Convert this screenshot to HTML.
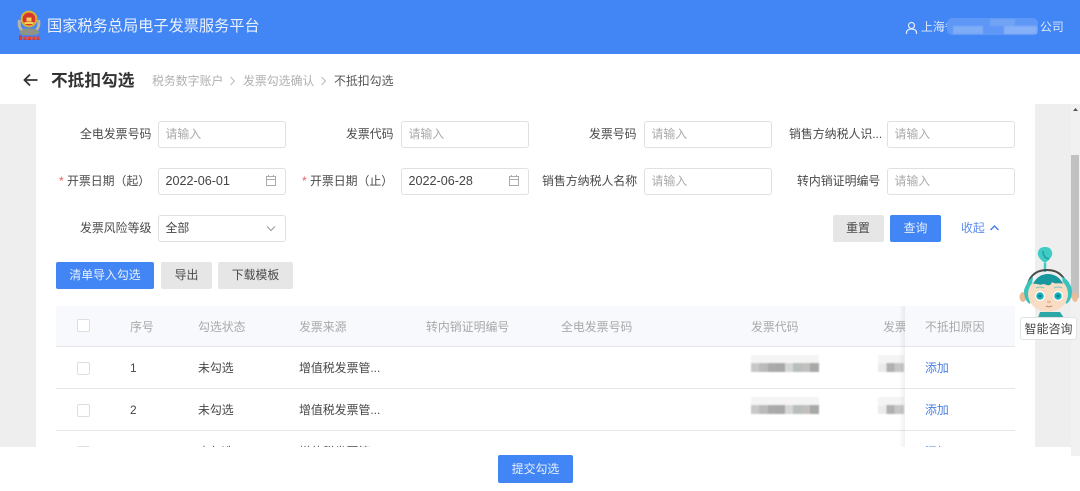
<!DOCTYPE html>
<html lang="zh-CN">
<head>
<meta charset="utf-8">
<title>不抵扣勾选</title>
<style>
html,body{margin:0;padding:0;background:#fff}
body{width:1080px;height:491px;position:relative;overflow:hidden;font-family:"Liberation Sans","Noto Sans CJK SC",sans-serif;font-size:11.9px;color:#444}
#r{position:absolute;left:0;top:0;width:1080px;height:491px;overflow:hidden;filter:blur(.3px)}
.a{position:absolute;white-space:nowrap}
.t{position:absolute;white-space:nowrap;line-height:18px;height:18px}
.l{position:absolute;white-space:nowrap;line-height:18px;height:18px;text-align:right;color:#4a4a4a}
.i{position:absolute;box-sizing:border-box;width:128px;height:27px;border:1px solid #e0e0e0;border-radius:3px;background:#fff;line-height:25px;padding-left:7px;color:#a8a8a8}
.v{color:#444}
.s{color:#e56060}
.btn{position:absolute;box-sizing:border-box;height:27px;line-height:27px;text-align:center;border-radius:2px;background:#e6e6e6;color:#4a4a4a}
.p{background:#4285f4;color:#e8f0fe}
.th{position:absolute;top:318px;line-height:18px;color:#a9a9a9;white-space:nowrap}
.td{position:absolute;line-height:18px;color:#484848;white-space:nowrap}
.cb{position:absolute;left:77px;width:13px;height:13px;box-sizing:border-box;border:1px solid #dedede;border-radius:2px;background:#fff}
.ln{position:absolute;left:56px;width:959px;height:1.4px;background:#e6e6e6}
.b{position:absolute;filter:blur(.7px)}
</style>
</head>
<body>
<div id="r">
<!-- header -->
<div class="a" style="left:0;top:0;width:1080px;height:54px;background:#4285f4"></div>
<svg class="a" style="left:16px;top:8px" width="26" height="36" viewBox="0 0 26 36">
<path d="M3.5 12C2 19 5 24 13 25.5C21 24 24 19 22.5 12" fill="none" stroke="#b9b4a6" stroke-width="3"/>
<path d="M3 24L8 20.5L18 20.5L24 24L20 27L6 27Z" fill="#8f9287"/>
<circle cx="13" cy="11" r="8.4" fill="#d8b13a"/>
<circle cx="13" cy="11" r="6.4" fill="#d6362c"/>
<path d="M8.5 14H17.5V16H8.5ZM10.5 9.5H15.5V13.5H10.5Z" fill="#f0cf58"/>
<path d="M3 27.5H6V32H3ZM7.5 28.5H10.5V32H7.5ZM12 28.5H15V32H12ZM16.5 28.5H19V32H16.5ZM20.5 28.5H23.5V32H20.5Z" fill="#d9342b"/>
<rect x="4" y="29.5" width="20" height="1" fill="#e8584c"/>
</svg>
<div class="t" style="left:47px;top:17px;font-size:15.2px;line-height:20px;height:20px;color:#eaf1fe">国家税务总局电子发票服务平台</div>
<svg class="a" style="left:905px;top:21px" width="13" height="14" viewBox="0 0 13 14">
<circle cx="6.5" cy="4.5" r="3" fill="none" stroke="#e3ecfd" stroke-width="1.2"/>
<path d="M1.5 13V11.5C1.5 9.5 3.5 8 6.5 8S11.5 9.5 11.5 11.5V13" fill="none" stroke="#e3ecfd" stroke-width="1.2"/>
</svg>
<div class="t" style="left:921px;top:18px;color:#dce8fd">上海省</div>
<div class="a" style="left:947px;top:18px;width:91px;height:17px;background:#5f97f6;border-radius:5px"></div>
<div class="b" style="left:953px;top:26px;width:30px;height:8px;background:#7eacf7"></div>
<div class="b" style="left:990px;top:19px;width:25px;height:7px;background:#72a4f6"></div>
<div class="b" style="left:1004px;top:26px;width:33px;height:8px;background:#86b1f8"></div>
<div class="t" style="left:1040px;top:18px;color:#dce8fd">公司</div>

<!-- title bar -->
<svg class="a" style="left:23px;top:73px" width="15" height="14" viewBox="0 0 15 14">
<path d="M14.5 7H1.5M7 1.5L1.5 7L7 12.5" fill="none" stroke="#333" stroke-width="1.8"/>
</svg>
<div class="t" style="left:51px;top:70px;font-size:16.7px;line-height:22px;height:22px;font-weight:700;color:#333">不抵扣勾选</div>
<div class="t" style="left:152px;top:72px;color:#b0b0b0">税务数字账户</div>
<svg class="a" style="left:229px;top:76px" width="7" height="10" viewBox="0 0 7 10"><path d="M1.5 1L5.5 5L1.5 9" fill="none" stroke="#bbb"/></svg>
<div class="t" style="left:243px;top:72px;color:#b0b0b0">发票勾选确认</div>
<svg class="a" style="left:320px;top:76px" width="7" height="10" viewBox="0 0 7 10"><path d="M1.5 1L5.5 5L1.5 9" fill="none" stroke="#bbb"/></svg>
<div class="t" style="left:334px;top:72px;color:#555">不抵扣勾选</div>

<!-- page grey -->
<div class="a" style="left:0;top:104px;width:1080px;height:343px;background:#eeeeee"></div>
<div class="a" style="left:36px;top:104px;width:999px;height:343px;background:#fff"></div>
<div class="a" style="left:1071px;top:104px;width:9px;height:352px;background:#f1f1f1"></div>
<div class="a" style="left:1071px;top:155px;width:8px;height:143px;background:#c1c1c1"></div>
<svg class="a" style="left:1072px;top:107px" width="7" height="5" viewBox="0 0 7 5"><path d="M3.5 1L6 4H1Z" fill="#555"/></svg>

<!-- form row 1 -->
<div class="l" style="left:80px;top:125px">全电发票号码</div>
<div class="i" style="left:157.5px;top:121px">请输入</div>
<div class="l" style="left:346px;top:125px">发票代码</div>
<div class="i" style="left:400.5px;top:121px">请输入</div>
<div class="l" style="left:589px;top:125px">发票号码</div>
<div class="i" style="left:643.5px;top:121px">请输入</div>
<div class="l" style="left:789px;top:125px">销售方纳税人识...</div>
<div class="i" style="left:886.5px;top:121px">请输入</div>

<!-- form row 2 -->
<div class="l" style="left:59px;top:172px"><span class="s">* </span>开票日期（起）</div>
<div class="i v" style="left:157.5px;top:168px;font-size:12.6px">2022-06-01</div>
<svg class="a" style="left:265px;top:174px" width="12" height="13" viewBox="0 0 12 13"><path d="M1.5 2.5H10.5V11.5H1.5ZM1.5 5.5H10.5M3.5 1V3M8.5 1V3" fill="none" stroke="#aaa"/></svg>
<div class="l" style="left:302px;top:172px"><span class="s">* </span>开票日期（止）</div>
<div class="i v" style="left:400.5px;top:168px;font-size:12.6px">2022-06-28</div>
<svg class="a" style="left:508px;top:174px" width="12" height="13" viewBox="0 0 12 13"><path d="M1.5 2.5H10.5V11.5H1.5ZM1.5 5.5H10.5M3.5 1V3M8.5 1V3" fill="none" stroke="#aaa"/></svg>
<div class="l" style="left:542px;top:172px">销售方纳税人名称</div>
<div class="i" style="left:643.5px;top:168px">请输入</div>
<div class="l" style="left:797px;top:172px">转内销证明编号</div>
<div class="i" style="left:886.5px;top:168px">请输入</div>

<!-- form row 3 -->
<div class="l" style="left:80px;top:219px">发票风险等级</div>
<div class="i v" style="left:157.5px;top:215px">全部</div>
<svg class="a" style="left:266px;top:225px" width="10" height="7" viewBox="0 0 10 7"><path d="M1 1.5L5 5.5L9 1.5" fill="none" stroke="#999"/></svg>
<div class="btn" style="left:832.5px;top:215px;width:51px">重置</div>
<div class="btn p" style="left:890px;top:215px;width:51px">查询</div>
<div class="t" style="left:961px;top:219px;color:#5b8df0">收起</div>
<svg class="a" style="left:989px;top:224px" width="11" height="8" viewBox="0 0 11 8"><path d="M1.5 6L5.5 2L9.5 6" fill="none" stroke="#4a80ee" stroke-width="1.5"/></svg>

<!-- actions -->
<div class="btn p" style="left:56px;top:262px;width:98px">清单导入勾选</div>
<div class="btn" style="left:161px;top:262px;width:51px">导出</div>
<div class="btn" style="left:218px;top:262px;width:75px">下载模板</div>

<!-- table -->
<div class="a" style="left:56px;top:306px;width:959px;height:40px;background:#f8f9fd"></div>
<div class="ln" style="top:345.5px"></div>
<div class="ln" style="top:387.5px"></div>
<div class="ln" style="top:429.7px"></div>
<div class="cb" style="top:319px"></div>
<div class="th" style="left:130px">序号</div>
<div class="th" style="left:198px">勾选状态</div>
<div class="th" style="left:299px">发票来源</div>
<div class="th" style="left:426px">转内销证明编号</div>
<div class="th" style="left:561px">全电发票号码</div>
<div class="th" style="left:751px">发票代码</div>
<div class="th" style="left:883px">发票号码</div>

<div class="cb" style="top:362px"></div>
<div class="td" style="left:130px;top:359px">1</div>
<div class="td" style="left:198px;top:359px">未勾选</div>
<div class="td" style="left:299px;top:359px">增值税发票管...</div>
<div class="cb" style="top:404px"></div>
<div class="td" style="left:130px;top:401px">2</div>
<div class="td" style="left:198px;top:401px">未勾选</div>
<div class="td" style="left:299px;top:401px">增值税发票管...</div>
<div class="cb" style="top:446px"></div>
<div class="td" style="left:130px;top:443px">3</div>
<div class="td" style="left:198px;top:443px">未勾选</div>
<div class="td" style="left:299px;top:443px">增值税发票管...</div>

<!-- blur row 1 -->
<div class="b" style="left:751px;top:355px;width:68px;height:8px;background:#f4f4f4"></div>
<div class="b" style="left:751px;top:363px;width:68px;height:9px;background:linear-gradient(90deg,#c8c8c8 0 12%,#bbb 12% 25%,#aaa 25% 37%,#a8a8a8 37% 50%,#d6d6d6 50% 62%,#b8bebe 62% 75%,#c2c0bc 75% 87%,#a8a8a8 87%)"></div>
<div class="b" style="left:878px;top:355px;width:26px;height:8px;background:#f4f4f4"></div>
<div class="b" style="left:878px;top:363px;width:26px;height:9px;background:linear-gradient(90deg,#ebebeb 0 32%,#b0b0b0 32% 64%,#c6c6c8 64%)"></div>
<!-- blur row 2 -->
<div class="b" style="left:751px;top:397px;width:68px;height:8px;background:#f4f4f4"></div>
<div class="b" style="left:751px;top:405px;width:68px;height:9px;background:linear-gradient(90deg,#c8c8c8 0 12%,#bbb 12% 25%,#aaa 25% 37%,#a8a8a8 37% 50%,#d6d6d6 50% 62%,#b8bebe 62% 75%,#c2c0bc 75% 87%,#a8a8a8 87%)"></div>
<div class="b" style="left:878px;top:397px;width:26px;height:8px;background:#f4f4f4"></div>
<div class="b" style="left:878px;top:405px;width:26px;height:9px;background:linear-gradient(90deg,#ebebeb 0 32%,#b0b0b0 32% 64%,#c6c6c8 64%)"></div>

<!-- fixed column -->
<div class="a" style="left:899px;top:306px;width:6px;height:141px;background:linear-gradient(90deg,rgba(0,0,0,0),rgba(0,0,0,.06))"></div>
<div class="a" style="left:905px;top:306px;width:110px;height:141px;background:#fff"></div>
<div class="a" style="left:905px;top:306px;width:110px;height:40px;background:#f8f9fd"></div>
<div class="ln" style="top:345.5px;left:905px;width:110px"></div>
<div class="ln" style="top:387.5px;left:905px;width:110px"></div>
<div class="ln" style="top:429.7px;left:905px;width:110px"></div>
<div class="th" style="left:925px">不抵扣原因</div>
<div class="td" style="left:925px;top:359px;color:#4a7fe0">添加</div>
<div class="td" style="left:925px;top:401px;color:#4a7fe0">添加</div>
<div class="td" style="left:925px;top:443px;color:#4a7fe0">添加</div>

<!-- bottom -->
<div class="a" style="left:0;top:447px;width:1071px;height:44px;background:#fff"></div>
<div class="a" style="left:1071px;top:456px;width:9px;height:35px;background:#fff"></div>
<div class="btn p" style="left:498px;top:455px;width:75px;height:28px;line-height:28px">提交勾选</div>

<!-- assistant -->
<svg class="a" style="left:1010px;top:240px" width="70" height="80" viewBox="1010 240 70 80">
<path d="M1045 263C1039 259 1037 255 1038 252C1039 248 1042 247 1045 247C1048 247 1051 248 1052 252C1053 255 1051 259 1045 263Z" fill="#3fcbc6"/>
<path d="M1045 263V272" stroke="#3fcbc6" stroke-width="2.5"/>
<path d="M1043 251C1043 256 1045 258 1049 259" fill="none" stroke="#2a9c9c" stroke-width="1.6"/>
<path d="M1028 292C1026 278 1035 270 1047 270S1068 278 1066 292" fill="none" stroke="#4b4b4b" stroke-width="2"/>
<ellipse cx="1023" cy="297" rx="3.5" ry="5" fill="#e9bb97"/>
<ellipse cx="1075" cy="297" rx="3" ry="5" fill="#e9bb97"/>
<path d="M1024 290C1027 282 1030 278 1033 277L1030 304C1026 302 1024 297 1024 290Z" fill="#38c3be"/>
<path d="M1072 290C1070 282 1066 278 1062 277L1066 304C1070 302 1072 297 1072 290Z" fill="#38c3be"/>
<ellipse cx="1048" cy="294" rx="20" ry="18" fill="#f8dcc4"/>
<path d="M1033 284C1037 276 1043 274 1048 274C1054 274 1060 277 1063 284C1058 282 1056 285 1052 282C1050 288 1046 284 1043 284C1040 286 1037 283 1033 284Z" fill="#19979f"/>
<circle cx="1040" cy="296" r="5" fill="#fff"/>
<circle cx="1058" cy="296" r="5" fill="#fff"/>
<circle cx="1040" cy="296" r="3.8" fill="#18b3bd"/>
<circle cx="1058" cy="296" r="3.8" fill="#18b3bd"/>
<circle cx="1040" cy="296" r="1.5" fill="#0d7e86"/>
<circle cx="1058" cy="296" r="1.5" fill="#0d7e86"/>
<path d="M1036 288Q1040 286 1044 288M1054 288Q1058 286 1062 288" fill="none" stroke="#7cc8c8" stroke-width="1"/>
<ellipse cx="1049" cy="302" rx="2" ry="1.2" fill="#efb89c"/>
<path d="M1046 306Q1049 307.5 1052 306" fill="none" stroke="#c98a6c"/>
<path d="M1040 312H1060L1064 318H1038Z" fill="#2aa8a8"/>
</svg>
<div class="a" style="left:1020px;top:317px;width:57px;height:23px;box-sizing:border-box;border:1px solid #e2e2e2;border-radius:3px;background:#fff;text-align:center;line-height:22px;color:#444;font-size:12px">智能咨询</div>
</div>
</body>
</html>
